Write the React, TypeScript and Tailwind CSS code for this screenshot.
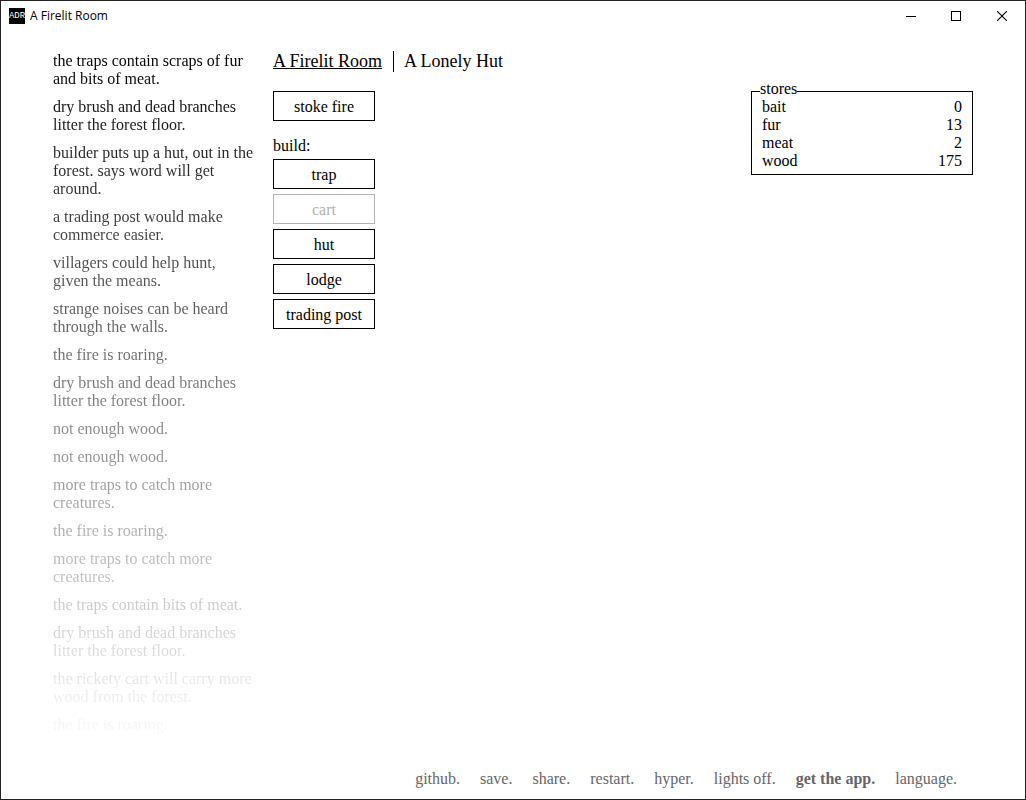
import { useState } from "react";

const messages = [
  "the traps contain scraps of fur and bits of meat.",
  "dry brush and dead branches litter the forest floor.",
  "builder puts up a hut, out in the forest. says word will get around.",
  "a trading post would make commerce easier.",
  "villagers could help hunt, given the means.",
  "strange noises can be heard through the walls.",
  "the fire is roaring.",
  "dry brush and dead branches litter the forest floor.",
  "not enough wood.",
  "not enough wood.",
  "more traps to catch more creatures.",
  "the fire is roaring.",
  "more traps to catch more creatures.",
  "the traps contain bits of meat.",
  "dry brush and dead branches litter the forest floor.",
  "the rickety cart will carry more wood from the forest.",
  "the fire is roaring.",
];

const stores = [
  { name: "bait", amount: 0 },
  { name: "fur", amount: 13 },
  { name: "meat", amount: 2 },
  { name: "wood", amount: 175 },
];

const builds = [
  { name: "trap" },
  { name: "cart", disabled: true },
  { name: "hut" },
  { name: "lodge" },
  { name: "trading post" },
];

const links = [
  { label: "github." },
  { label: "save." },
  { label: "share." },
  { label: "restart." },
  { label: "hyper." },
  { label: "lights off." },
  { label: "get the app.", strong: true },
  { label: "language." },
];

function TitleBar() {
  return (
    <header className="flex h-[30px] items-center pl-2 font-['Open_Sans',sans-serif] text-xs">
      <span
        aria-hidden="true"
        className="flex size-4 items-center justify-center overflow-hidden bg-black font-['Liberation_Mono',monospace] text-[9px] leading-none text-white"
      >
        ADR
      </span>
      <h1 className="ml-[5px] flex-1">A Firelit Room</h1>
      <button type="button" aria-label="Minimize" className="flex h-full w-[45px] items-center justify-center">
        <svg width="10" height="10" viewBox="0 0 10 10" shapeRendering="crispEdges">
          <path d="M0 5h10v1H0z" fill="black" />
        </svg>
      </button>
      <button type="button" aria-label="Maximize" className="flex h-full w-[46px] items-center justify-center">
        <svg width="10" height="10" viewBox="0 0 10 10" shapeRendering="crispEdges">
          <rect x="0.5" y="0.5" width="9" height="9" fill="none" stroke="black" />
        </svg>
      </button>
      <button type="button" aria-label="Close" className="flex h-full w-[46px] items-center justify-center">
        <svg width="10" height="10" viewBox="0 0 10 10">
          <path d="M0 0l10 10M10 0L0 10" fill="none" stroke="black" strokeWidth="1.1" />
        </svg>
      </button>
    </header>
  );
}

function ActionButton({ label, disabled }: { label: string; disabled?: boolean }) {
  return (
    <button
      type="button"
      disabled={disabled}
      className="h-[30px] w-[102px] border border-black pt-0.5 disabled:border-[#b2b2b2] disabled:text-[#b2b2b2]"
    >
      {label}
    </button>
  );
}

export default function App() {
  const [tab, setTab] = useState("A Firelit Room");

  return (
    <div className="flex min-h-screen flex-col border border-[#222] bg-white font-['Liberation_Serif',serif] text-base leading-[18px] text-black">
      <TitleBar />
      <div className="mx-auto flex w-full max-w-[920px] flex-1 flex-col pt-5">
        <div className="flex flex-1 gap-5">
          <ul
            aria-label="Notifications"
            className="flex h-[700px] w-[200px] shrink-0 flex-col gap-2.5 overflow-hidden pt-px mask-[linear-gradient(to_bottom,black,transparent)]"
          >
            {messages.map((message, index) => (
              <li key={index}>{message}</li>
            ))}
          </ul>
          <main className="min-w-0 flex-1">
            <nav className="flex text-lg leading-[21px]">
              {["A Firelit Room", "A Lonely Hut"].map((name) => (
                <button
                  key={name}
                  type="button"
                  aria-current={tab === name ? "page" : undefined}
                  onClick={() => setTab(name)}
                  className="border-black not-first:ml-[11px] not-first:border-l not-first:pl-2.5 aria-[current=page]:underline"
                >
                  {name}
                </button>
              ))}
            </nav>
            <div className="mt-[19px] flex items-start justify-between">
              <div className="flex flex-col">
                <ActionButton label="stoke fire" />
                <h2 className="mt-4">build:</h2>
                <div className="mt-1 flex flex-col gap-[5px]">
                  {builds.map((item) => (
                    <ActionButton key={item.name} label={item.name} disabled={item.disabled} />
                  ))}
                </div>
              </div>
              <section aria-labelledby="stores-title" className="relative w-[222px] border border-black px-2.5 pt-1.5 pb-1">
                <h2 id="stores-title" className="absolute -top-3 left-2 bg-white">
                  stores
                </h2>
                <table className="relative w-full">
                  <tbody>
                    {stores.map((store) => (
                      <tr key={store.name}>
                        <th scope="row" className="p-0 text-left font-normal">
                          {store.name}
                        </th>
                        <td className="p-0 text-right">{store.amount}</td>
                      </tr>
                    ))}
                  </tbody>
                </table>
              </section>
            </div>
          </main>
        </div>
        <footer className="flex justify-end gap-5 pr-4 pb-[11px] text-[#666]">
          {links.map((link) => (
            <a key={link.label} href="#" className={link.strong ? "font-bold" : ""}>
              {link.label}
            </a>
          ))}
        </footer>
      </div>
    </div>
  );
}
